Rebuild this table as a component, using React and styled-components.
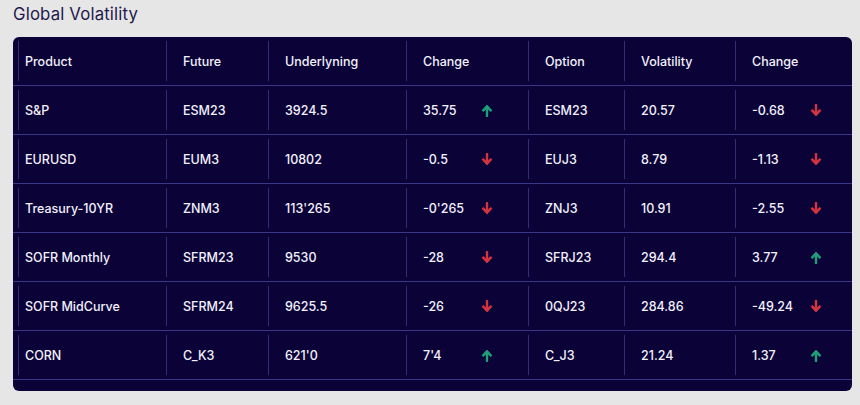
import React from "react";
import styled, { createGlobalStyle } from "styled-components";

const Global = createGlobalStyle`
  html, body { margin: 0; padding: 0; background: #e6e6e6; }
  body { font-family: Inter, "Noto Sans", sans-serif; }
`;

const Page = styled.div`
  width: 860px;
  height: 405px;
  box-sizing: border-box;
  padding: 3px 8px 0 13px;
  background: #e6e6e6;
`;

const Title = styled.h1`
  margin: 0;
  height: 34px;
  font-family: Inter, sans-serif;
  font-weight: 400;
  font-size: 16.8px;
  line-height: 22px;
  color: #1e1a4d;
  letter-spacing: 0.15px;
`;

const Card = styled.div`
  width: 839px;
  background: #0b0238;
  border-radius: 6px;
  padding-bottom: 11px;
`;

const COLS = "148px 102px 138px 122px 96px 111px 1fr";

const Row = styled.div`
  display: grid;
  grid-template-columns: ${COLS};
  padding-left: 5px;
  height: 48px;
  border-bottom: 1px solid #3b3585;
`;

const Cell = styled.div`
  margin: 4px 0;
  border-left: 1px solid #322d78;
  display: flex;
  align-items: center;
  padding-left: ${(p) => (p.$first ? "6px" : "16px")};
  color: #f2f1fb;
  font-size: 12.5px;
  font-weight: 500;
  white-space: nowrap;
`;

const Value = styled.span`
  min-width: 50px;
`;

const ArrowBox = styled.span`
  display: inline-flex;
  margin-left: 8px;
  color: ${(p) => (p.$up ? "#1fa07a" : "#d5343f")};
`;

const Arrow = ({ up }) => (
  <ArrowBox $up={up}>
    <svg width="12" height="13" viewBox="0 0 12 13">
      <g transform={up ? undefined : "rotate(180 6 6.5)"}>
        <path
          d="M6 12V4"
          fill="none"
          stroke="currentColor"
          strokeWidth="2.4"
          strokeLinecap="round"
        />
        <path
          d="M6 1 11 6.4 9.6 7.6 6 4.3 2.4 7.6 1 6.4Z"
          fill="currentColor"
          stroke="currentColor"
          strokeWidth="0.8"
          strokeLinejoin="round"
        />
      </g>
    </svg>
  </ArrowBox>
);

const headers = ["Product", "Future", "Underlyning", "Change", "Option", "Volatility", "Change"];

const data = [
  ["S&P", "ESM23", "3924.5", "35.75", true, "ESM23", "20.57", "-0.68", false],
  ["EURUSD", "EUM3", "10802", "-0.5", false, "EUJ3", "8.79", "-1.13", false],
  ["Treasury-10YR", "ZNM3", "113'265", "-0'265", false, "ZNJ3", "10.91", "-2.55", false],
  ["SOFR Monthly", "SFRM23", "9530", "-28", false, "SFRJ23", "294.4", "3.77", true],
  ["SOFR MidCurve", "SFRM24", "9625.5", "-26", false, "0QJ23", "284.86", "-49.24", false],
  ["CORN", "C_K3", "621'0", "7'4", true, "C_J3", "21.24", "1.37", true],
];

export default function App() {
  return (
    <>
      <Global />
      <Page>
        <Title>Global Volatility</Title>
        <Card>
          <Row>
            {headers.map((h, i) => (
              <Cell key={i} $first={i === 0}>
                {h}
              </Cell>
            ))}
          </Row>
          {data.map((r, i) => (
            <Row key={i}>
              <Cell $first>{r[0]}</Cell>
              <Cell>{r[1]}</Cell>
              <Cell>{r[2]}</Cell>
              <Cell>
                <Value>{r[3]}</Value>
                <Arrow up={r[4]} />
              </Cell>
              <Cell>{r[5]}</Cell>
              <Cell>{r[6]}</Cell>
              <Cell>
                <Value>{r[7]}</Value>
                <Arrow up={r[8]} />
              </Cell>
            </Row>
          ))}
        </Card>
      </Page>
    </>
  );
}
